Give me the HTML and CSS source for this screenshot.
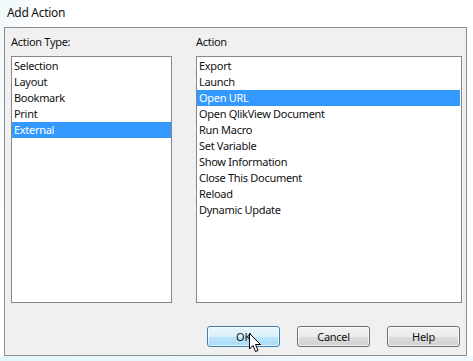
FILE: index.html
```html
<!DOCTYPE html>
<html lang="en">
<head>
    <meta charset="UTF-8">
    <title>Add Action</title>
    <link rel="stylesheet" href="styles.css">
</head>
<body>
    <div class="window">
        <div class="titlebar">Add Action</div>

        <div class="panel">
            <div class="columns">
                <div class="column">
                    <label class="caption">Action Type:</label>
                    <ul class="listbox">
                        <li>Selection</li>
                        <li>Layout</li>
                        <li>Bookmark</li>
                        <li>Print</li>
                        <li class="selected">External</li>
                    </ul>
                </div>
                <div class="column">
                    <label class="caption">Action</label>
                    <ul class="listbox wide">
                        <li>Export</li>
                        <li>Launch</li>
                        <li class="selected">Open URL</li>
                        <li>Open QlikView Document</li>
                        <li>Run Macro</li>
                        <li>Set Variable</li>
                        <li>Show Information</li>
                        <li>Close This Document</li>
                        <li>Reload</li>
                        <li>Dynamic Update</li>
                    </ul>
                </div>
            </div>

            <div class="buttons">
                <button class="btn hot">OK
                    <svg class="cursor" width="13" height="20" viewBox="0 0 13 20">
                        <path d="M0.5 0.5 L0.5 16 L4 12.5 L6.5 18.5 L9 17.5 L6.5 11.5 L11.5 11.5 Z" fill="#fff" stroke="#000" stroke-width="1" stroke-linejoin="miter"/>
                    </svg>
                </button>
                <button class="btn">Cancel</button>
                <button class="btn">Help</button>
            </div>
        </div>
        <div class="footer"></div>
    </div>
</body>
</html>
```

FILE: styles.css
```css
* {
    margin: 0;
    padding: 0;
    box-sizing: border-box;
}

body {
    font-family: 'Noto Sans', 'Liberation Sans', sans-serif;
    font-size: 11px;
    letter-spacing: -0.3px;
    color: #111;
    background: #fff;
}

.window {
    width: 473px;
    height: 361px;
    background: linear-gradient(100deg, #eef7fb 0%, #ffffff 8%, #ffffff 100%);
}

.titlebar {
    height: 27px;
    padding: 5px 0 0 7px;
    line-height: 16px;
    font-size: 12px;
}

.panel {
    margin-left: 4px;
    width: 463px;
    height: 329px;
    background: #f0f0f0;
    border: 1px solid #8c8c8c;
    padding: 6px 4px 8px 6px;
}

.columns {
    display: grid;
    grid-template-columns: 161px 266px;
    column-gap: 24px;
}

.caption {
    display: block;
    height: 16px;
    line-height: 16px;
    margin-bottom: 6px;
}

.listbox {
    list-style: none;
    height: 247px;
    background: #fff;
    border: 1px solid #828790;
    padding-top: 1px;
}

.listbox.wide {
    padding-right: 1px;
}

.listbox li {
    height: 16px;
    line-height: 16px;
    padding-left: 2px;
    white-space: nowrap;
}

.listbox li.selected {
    background: #3399ff;
    color: #fff;
}

.buttons {
    display: flex;
    margin-top: 23px;
    padding-left: 196px;
    gap: 17px;
}

.btn {
    position: relative;
    width: 73px;
    height: 21px;
    font-family: inherit;
    font-size: 11px;
    letter-spacing: -0.3px;
    color: #111;
    border: 1px solid #707070;
    border-radius: 3px;
    background: linear-gradient(#f2f2f2 0%, #ebebeb 50%, #dddddd 51%, #cfcfcf 100%);
    box-shadow: inset 0 0 0 1px rgba(255, 255, 255, 0.7);
}

.btn.hot {
    border-color: #3c7fb1;
    background: linear-gradient(#eaf6fd 0%, #d9f0fc 50%, #bee6fd 51%, #a7d9f5 100%);
}

.cursor {
    position: absolute;
    left: 41px;
    top: 6px;
}

.footer {
    height: 6px;
    background: linear-gradient(90deg, #e4f6fb, #f1fbfe);
}
```
